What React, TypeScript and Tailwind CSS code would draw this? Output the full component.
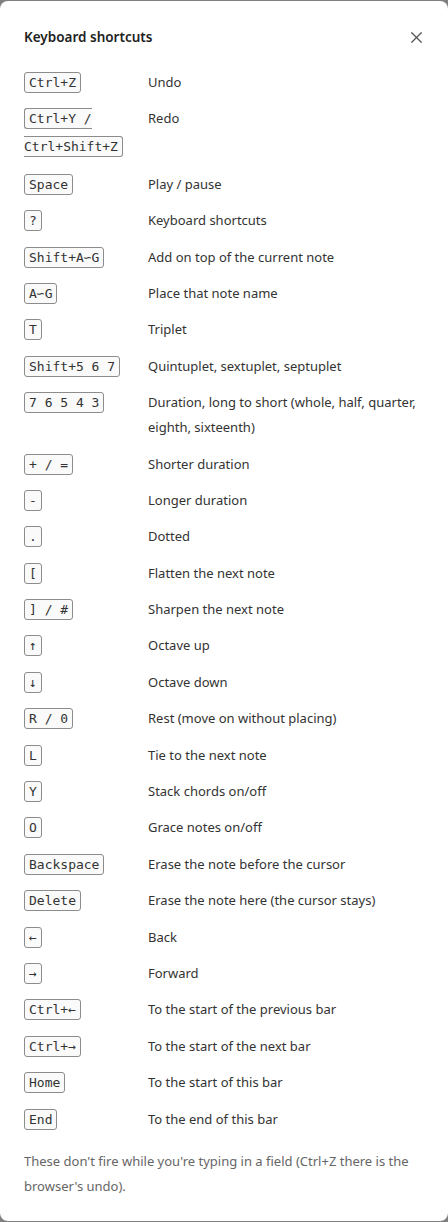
import React from 'react';
import { X } from 'lucide-react';

interface Shortcut {
  keys: string;
  label: string;
  wraps?: boolean;
}

const SHORTCUTS: Shortcut[] = [
  { keys: 'Ctrl+Z', label: 'Undo' },
  { keys: 'Ctrl+Y / Ctrl+Shift+Z', label: 'Redo', wraps: true },
  { keys: 'Space', label: 'Play / pause' },
  { keys: '?', label: 'Keyboard shortcuts' },
  { keys: 'Shift+A∽G', label: 'Add on top of the current note' },
  { keys: 'A∽G', label: 'Place that note name' },
  { keys: 'T', label: 'Triplet' },
  { keys: 'Shift+5 6 7', label: 'Quintuplet, sextuplet, septuplet' },
  { keys: '7 6 5 4 3', label: 'Duration, long to short (whole, half, quarter, eighth, sixteenth)' },
  { keys: '+ / =', label: 'Shorter duration' },
  { keys: '-', label: 'Longer duration' },
  { keys: '.', label: 'Dotted' },
  { keys: '[', label: 'Flatten the next note' },
  { keys: '] / #', label: 'Sharpen the next note' },
  { keys: '↑', label: 'Octave up' },
  { keys: '↓', label: 'Octave down' },
  { keys: 'R / 0', label: 'Rest (move on without placing)' },
  { keys: 'L', label: 'Tie to the next note' },
  { keys: 'Y', label: 'Stack chords on/off' },
  { keys: 'O', label: 'Grace notes on/off' },
  { keys: 'Backspace', label: 'Erase the note before the cursor' },
  { keys: 'Delete', label: 'Erase the note here (the cursor stays)' },
  { keys: '←', label: 'Back' },
  { keys: '→', label: 'Forward' },
  { keys: 'Ctrl+←', label: 'To the start of the previous bar' },
  { keys: 'Ctrl+→', label: 'To the start of the next bar' },
  { keys: 'Home', label: 'To the start of this bar' },
  { keys: 'End', label: 'To the end of this bar' },
];

const Kbd = ({ children }: { children: React.ReactNode }) => (
  <kbd className="rounded-[3px] border border-[#8c8c8c] bg-[#fafafa] px-[4px] py-[2px] font-['DejaVu_Sans_Mono',monospace] text-[13px] leading-none text-[#333] [box-decoration-break:slice]">
    {children}
  </kbd>
);

export default function App() {
  return (
    <div className="min-h-screen bg-[#808080] pt-px">
      <div className="h-[1220px] rounded-lg bg-white px-6 pt-6 font-['Noto_Sans',sans-serif] text-[13px] text-[#333]">
        <div className="flex items-center justify-between">
          <h2 className="text-[13.5px] leading-[25px] font-semibold text-[#222]">Keyboard shortcuts</h2>
          <button className="mr-[-4px] flex h-6 w-6 items-center justify-center text-[#555]">
            <X size={19} strokeWidth={1.5} />
          </button>
        </div>

        {/* Shortcut list */}
        <dl className="mt-[20px] grid grid-cols-[112px_1fr] gap-x-3 gap-y-[11.4px]">
          {SHORTCUTS.map((s) => (
            <React.Fragment key={s.keys}>
              <dt className={s.wraps ? '-mt-[2px] leading-[28px]' : 'leading-[25px]'}>
                <Kbd>{s.keys}</Kbd>
              </dt>
              <dd className="leading-[25px]">{s.label}</dd>
            </React.Fragment>
          ))}
        </dl>

        <p className="mt-[17px] leading-[25px] text-[#666]">
          These don't fire while you're typing in a field (Ctrl+Z there is the browser's undo).
        </p>
      </div>
    </div>
  );
}
